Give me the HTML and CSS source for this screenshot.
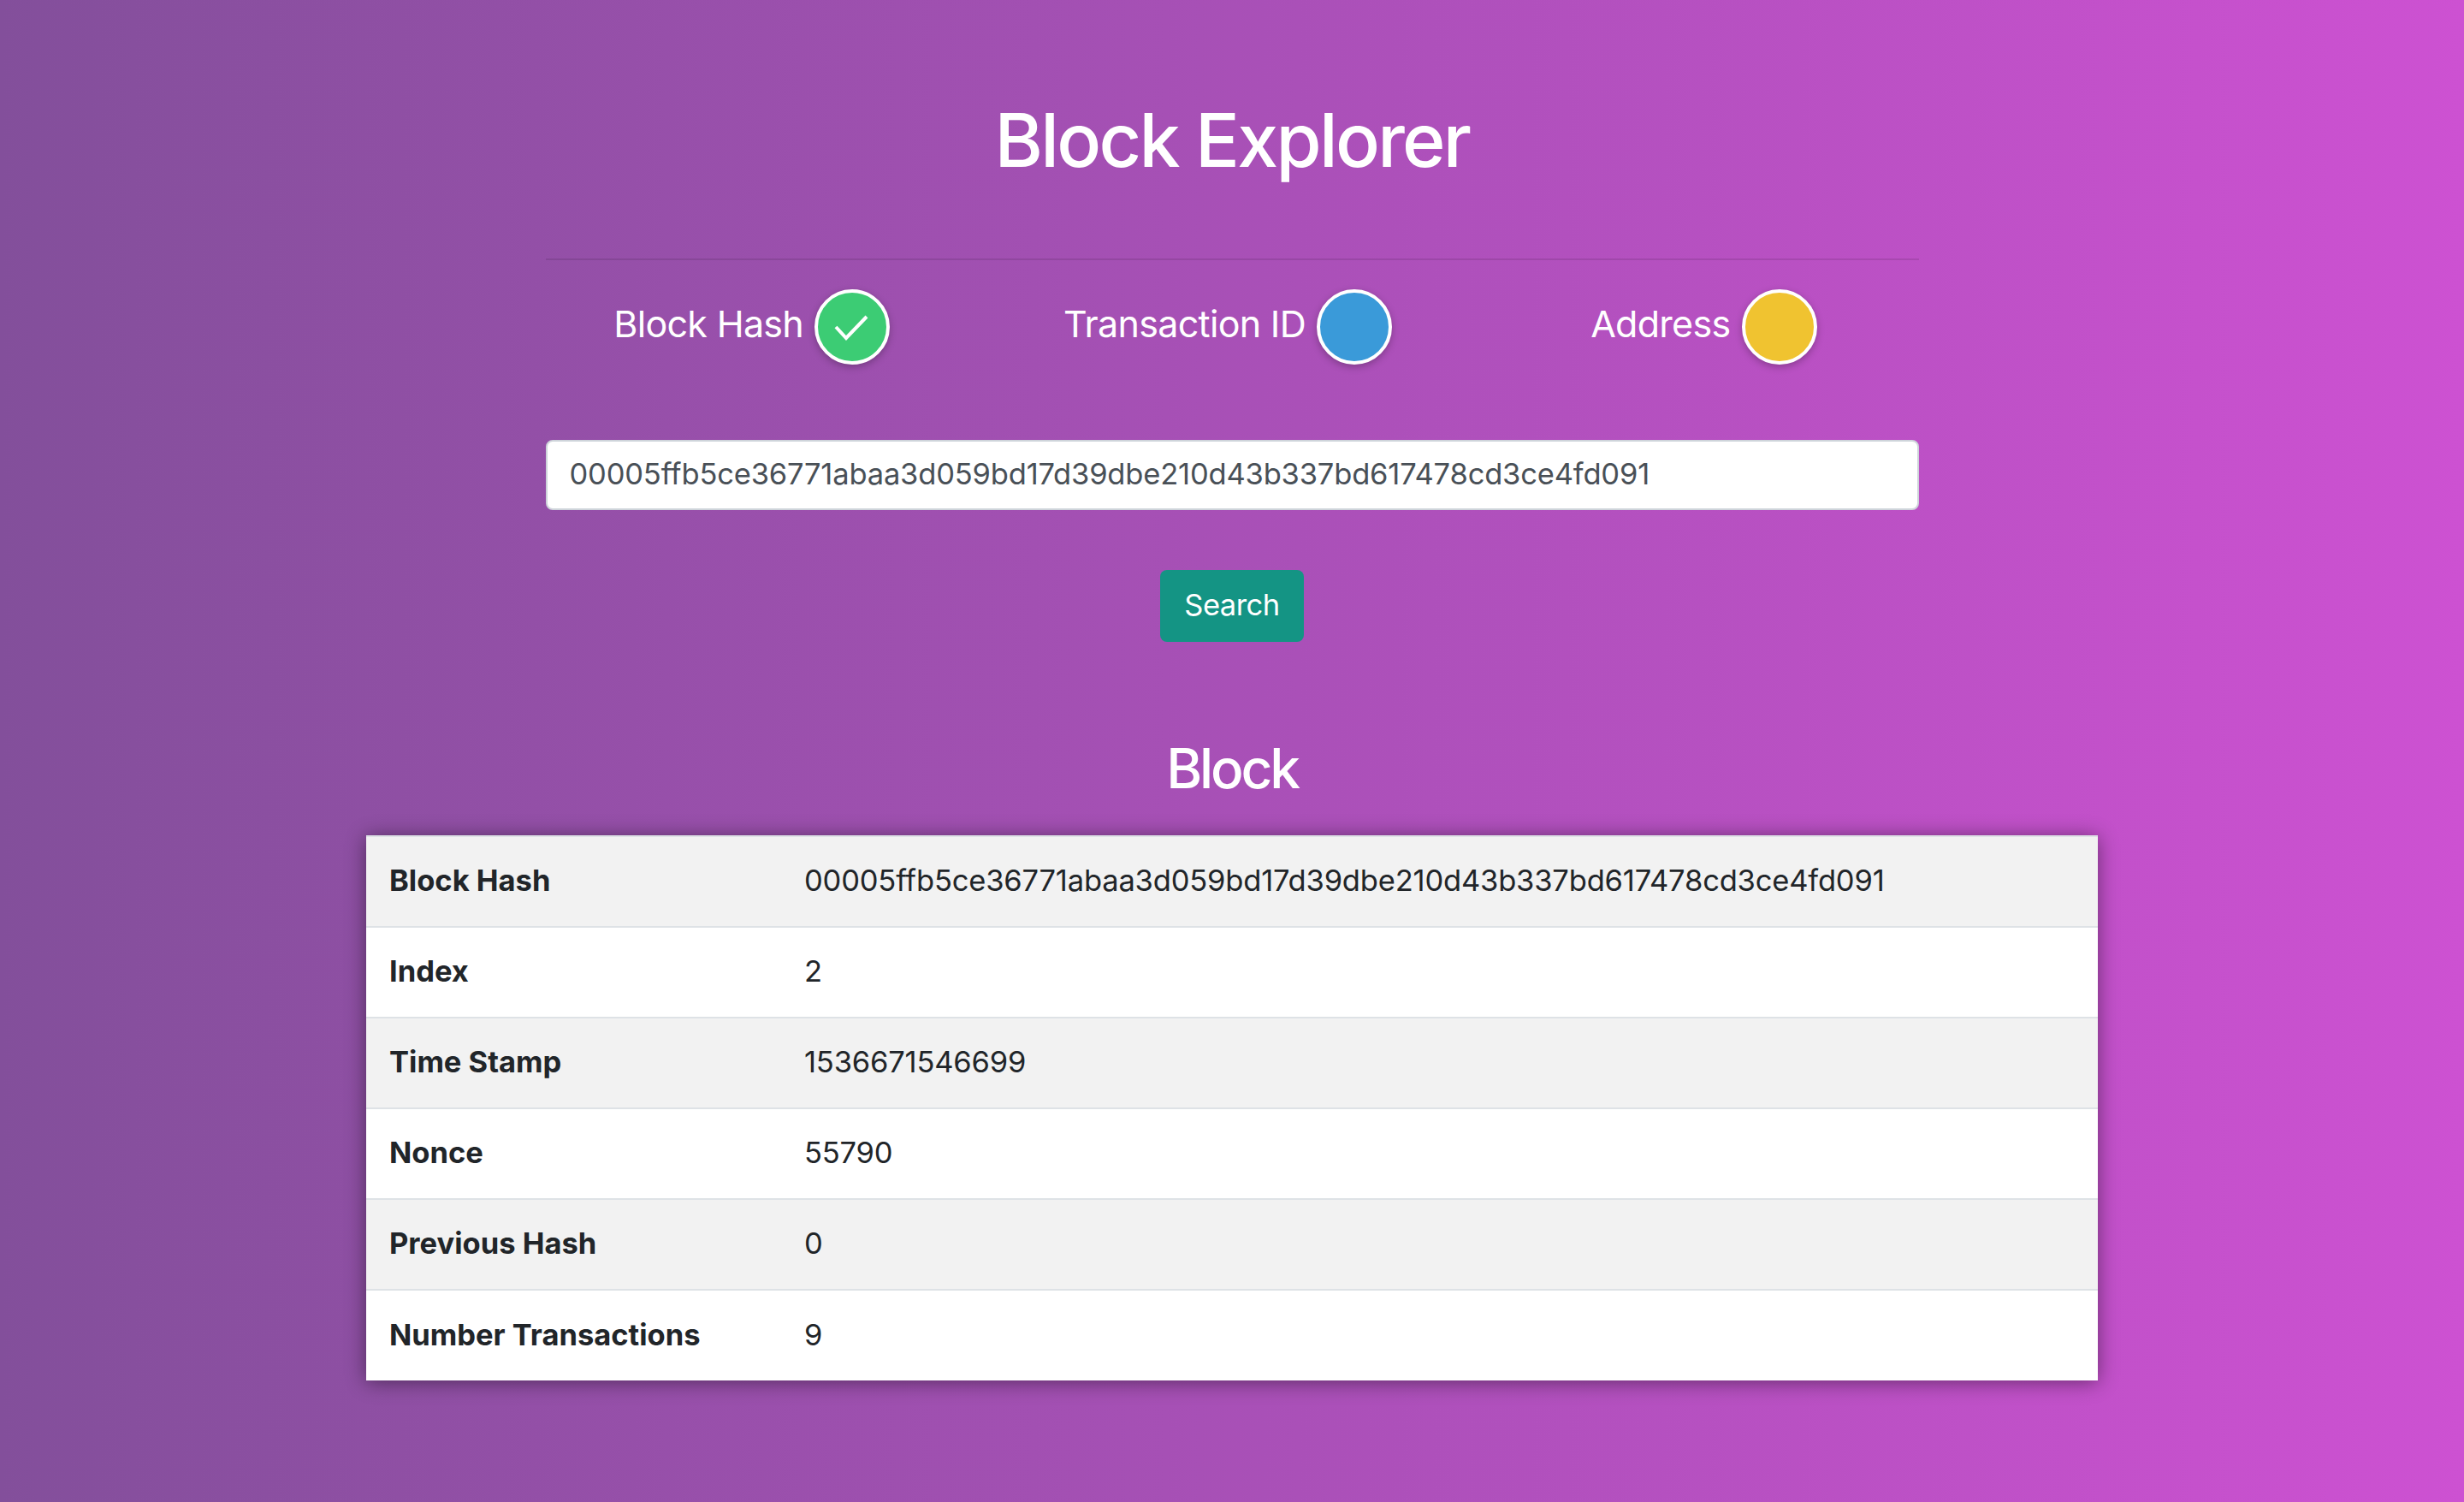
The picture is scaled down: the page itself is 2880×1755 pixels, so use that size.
FILE: index.html
```html
<!DOCTYPE html>
<html lang="en">
<head>
	<meta charset="UTF-8">
	<title>Block Explorer</title>
	<link rel="stylesheet" href="styles.css">
</head>
<body>
<div class="page">
	<h1 class="title">Block Explorer</h1>
	<form class="search">
		<hr class="rule">
		<div class="types">
			<label class="type">
				<span class="type-name">Block Hash</span>
				<span class="dot dot-green">
					<svg viewBox="0 0 80 80" width="80" height="80"><polyline points="21,40 33,53 57,28" fill="none" stroke="#fff" stroke-width="4"/></svg>
				</span>
			</label>
			<label class="type">
				<span class="type-name">Transaction ID</span>
				<span class="dot dot-blue"></span>
			</label>
			<label class="type">
				<span class="type-name">Address</span>
				<span class="dot dot-yellow"></span>
			</label>
		</div>
		<input class="search-input" type="text" value="00005ffb5ce36771abaa3d059bd17d39dbe210d43b337bd617478cd3ce4fd091">
		<button class="search-btn" type="button">Search</button>
	</form>
	<h2 class="subtitle">Block</h2>
	<table class="info">
		<tr><th>Block Hash</th><td>00005ffb5ce36771abaa3d059bd17d39dbe210d43b337bd617478cd3ce4fd091</td></tr>
		<tr><th>Index</th><td>2</td></tr>
		<tr><th>Time Stamp</th><td>1536671546699</td></tr>
		<tr><th>Nonce</th><td>55790</td></tr>
		<tr><th>Previous Hash</th><td>0</td></tr>
		<tr><th>Number Transactions</th><td>9</td></tr>
	</table>
</div>
</body>
</html>
```

FILE: styles.css
```css
*{box-sizing: border-box;}
html,body{height: 100%;}
body{margin: 0;background: linear-gradient(to right,#834f9b,#cd51d2);font-family: "Inter","Liberation Sans",sans-serif;font-size: 34.5px;color: #212529;letter-spacing: -0.18px;}
.page{display: flex;flex-direction: column;align-items: center;padding-top: 112px;}
.title{margin: 0;font-size: 86px;line-height: 104px;font-weight: 500;color: #fff;letter-spacing: -2.7px;}
.search{width: 1605px;margin-top: 86px;display: flex;flex-direction: column;align-items: center;}
.rule{width: 100%;margin: 0;border: none;border-top: 2px solid rgba(0,0,0,.1);}
.types{width: 1669px;display: grid;grid-template-columns: repeat(3,1fr);margin-top: 34px;}
.type{display: flex;align-items: center;justify-content: center;gap: 13px;padding-right: 10px;color: #fff;font-size: 43px;letter-spacing: -0.7px;}
.type-name{position: relative;top: -4px;}
.dot{width: 88px;height: 88px;border: 4px solid #fff;border-radius: 50%;box-shadow: 0 3px 8px rgba(0,0,0,.25);display: block;}
.dot svg{display: block;}
.dot-green{background: #3ccc74;}
.dot-blue{background: #3a9ad9;}
.dot-yellow{background: #f0c330;}
.search-input{width: 100%;height: 82px;margin-top: 88px;padding: 0 26px 3px;background: #fff;border: 2px solid #ced4da;border-radius: 8px;font: inherit;letter-spacing: inherit;color: #495057;outline: none;}
.search-btn{width: 168px;height: 84px;margin-top: 70px;padding: 0 0 3px;background: #149484;border: none;border-radius: 8px;color: #fff;font: inherit;letter-spacing: -0.5px;}
.subtitle{margin: 109px 0 0;font-size: 64px;line-height: 78px;font-weight: 500;color: #fff;letter-spacing: -3.2px;}
.info{width: 2024px;margin-top: 39px;border-collapse: collapse;background: #fff;box-shadow: 0 2px 22px rgba(0,0,0,.45);}
.info tr:nth-child(odd){background: #f2f2f2;}
.info th,.info td{height: 106px;padding: 0 26px 3px;text-align: left;border-top: 2px solid #dee2e6;}
.info th{width: 486px;font-weight: 700;letter-spacing: 0;padding-left: 27px;}
```
